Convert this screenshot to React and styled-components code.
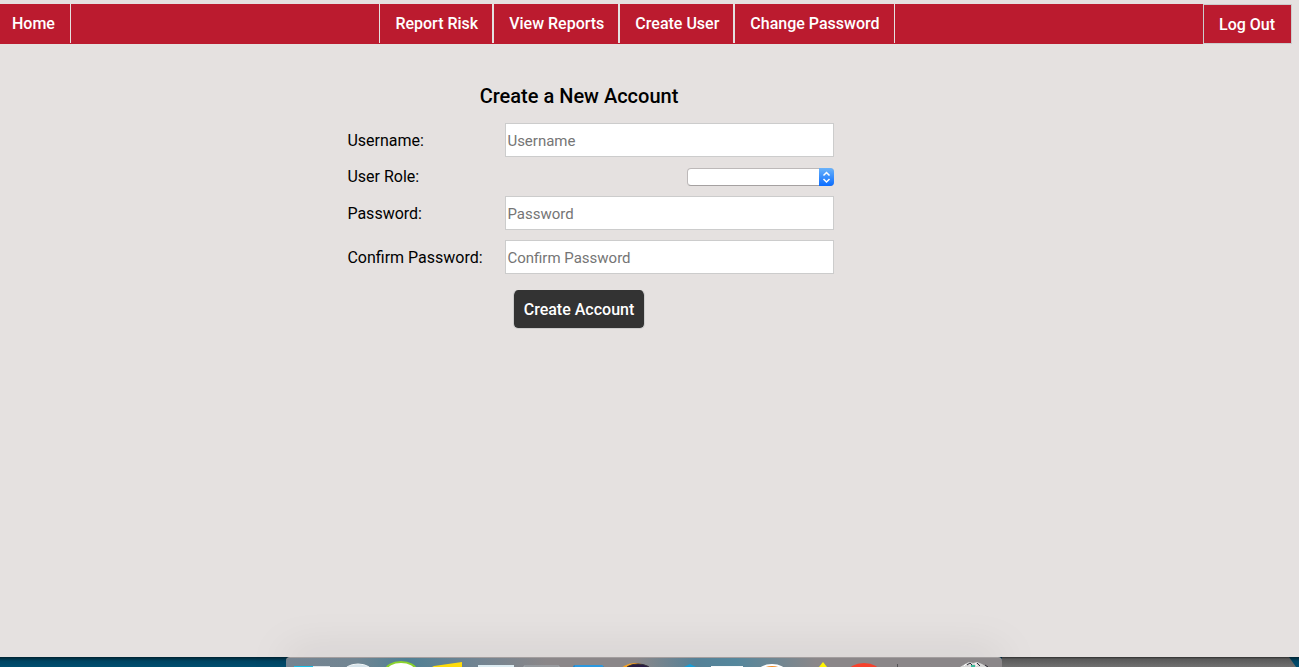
import React from "react";
import styled, { createGlobalStyle } from "styled-components";

const RED = "#bb1b2f";

const GlobalStyle = createGlobalStyle`
  *, *::before, *::after { box-sizing: border-box; }
  body {
    margin: 0;
    background: #e5e1e0;
    color: #000;
    font-family: Roboto, "Liberation Sans", sans-serif;
    font-size: 16px;
    line-height: 20px;
  }
  input, select, button { font-family: inherit; }
`;

const Page = styled.div`
  display: flex;
  flex-direction: column;
  min-height: 100vh;
`;

const Header = styled.header`
  display: flex;
  padding: 4px 7px 0 0;
`;

const NavBar = styled.nav`
  display: flex;
  align-items: flex-start;
  flex: 1;
  height: 40px;
  background: ${RED};
`;

const NavGroup = styled.div`
  display: flex;
  margin: 0 auto;
`;

const NavLink = styled.a`
  height: 39px;
  padding: ${(p) => (p.$home ? "10px 15px 9px 12px" : "10px 14px 9px 15px")};
  border: solid #e5e1e0;
  border-width: ${(p) => (p.$home ? "0 1px 0 0" : "0 1px")};
  color: #fff;
  font-weight: 500;
  text-decoration: none;
  white-space: nowrap;
`;

const LogOutButton = styled.button`
  height: 40px;
  padding: 0 16px 0 15px;
  border: 1px solid #ccc;
  background: ${RED};
  color: #fff;
  font-size: 16px;
  font-weight: 500;
`;

const Main = styled.main`
  flex: 1;
  padding: 41px 141px 0 0;
`;

const Form = styled.form`
  display: flex;
  flex-direction: column;
  width: 40%;
  margin: 0 auto;
`;

const Title = styled.h1`
  margin: 0 0 16px;
  font-size: 20px;
  line-height: 22px;
  font-weight: 500;
  text-align: center;
`;

const Fields = styled.div`
  display: grid;
  grid-template-columns: 158px 329px;
  row-gap: 10px;
  align-items: center;
  line-height: 19px;
`;

const Input = styled.input`
  width: 100%;
  height: 34px;
  padding: 1px 1px 0;
  border: 1px solid #ccc;
  border-radius: 0;
  background: #fff;
  font-size: 15px;
  &::placeholder { color: #757575; }
`;

const SelectBox = styled.div`
  position: relative;
  justify-self: end;
  align-self: end;
  width: 147px;
  height: 18px;
`;

const Select = styled.select`
  display: block;
  width: 100%;
  height: 100%;
  border: 1px solid #bdb9b9;
  border-bottom-color: #a5a1a1;
  border-radius: 4px;
  background: #fff;
  appearance: none;
`;

const Stepper = styled.span`
  position: absolute;
  inset: 0 0 0 auto;
  width: 15px;
  border-radius: 0 4px 4px 0;
  background: linear-gradient(#6bb3fa, #0a6cff);
  pointer-events: none;
  svg { display: block; }
`;

const SubmitButton = styled.button`
  align-self: center;
  height: 39px;
  margin-top: 16px;
  padding: 0 10px;
  border: 1px solid #ccc;
  border-width: 0 1px 1px;
  border-radius: 5px;
  background: #333;
  background-clip: padding-box;
  color: #fff;
  font-size: 16px;
  font-weight: 500;
`;

const Desktop = styled.footer`
  display: grid;
  grid-template-columns: 1fr 716px 1fr;
  height: 10px;
  padding-right: 11px;
  background: linear-gradient(rgba(0, 0, 0, 0.55), rgba(0, 0, 0, 0.12) 4px, rgba(0, 0, 0, 0)), #004e70;
`;

const Dock = styled.div`
  grid-column: 2;
  overflow: hidden;
  border-top: 1px solid #a29e9e;
  border-radius: 4px 4px 0 0;
  background: linear-gradient(
    90deg,
    #768491 0, #718592 70px, #4f8094 120px, #718492 190px, #8b8789 260px,
    #8b8789 350px, #558197 410px, #55879c 450px, #8b8789 530px, #8b8789
  );
  box-shadow: 0 0 44px rgba(0, 0, 0, 0.22);
  svg { display: block; }
`;

const Window = styled.div`
  margin-right: -8px;
  background: linear-gradient(#303030, #5a5a5a 2px, #707070);
  clip-path: polygon(0 0, calc(100% - 7px) 0, 100% 100%, 0 100%);
`;

function DockIcons() {
  return (
    <svg width="716" height="9" viewBox="0 1 716 9" aria-hidden="true">
      <path d="M8 9h19v1H8z" fill="#18bfe8" />
      <path d="M27 9h17v1H27z" fill="#dce3e8" />
      <ellipse cx="72" cy="16" rx="15" ry="9" fill="#d5e3ea" stroke="#f2f7f8" />
      <ellipse cx="115" cy="13" rx="16" ry="9" fill="#8bd32d" />
      <ellipse cx="115" cy="14" rx="14" ry="8" fill="#fff" />
      <path d="M148 9 176 5V10H146z" fill="#ffdc0a" />
      <path d="M192 8h36v2H192z" fill="#dcecf2" />
      <path d="M238 10V9h35v1" fill="none" stroke="#a5adb2" />
      <path d="M287 10V9l2-1h27l2 2z" fill="#2086cc" />
      <path d="M289 9h28" stroke="#37a9ef" />
      <ellipse cx="349" cy="15" rx="15" ry="9" fill="#f5a020" />
      <ellipse cx="352" cy="15" rx="14" ry="8" fill="#271a42" stroke="#34313b" />
      <path d="m398 10 6-3 6 3z" fill="#159ed8" />
      <path d="M425 9h32v1H425z" fill="#f5f8f9" />
      <ellipse cx="486" cy="15" rx="14" ry="8" fill="#fff" />
      <ellipse cx="486" cy="16" rx="12" ry="7" fill="#f58b22" />
      <path d="m533 10 4-5 4 5z" fill="#fff500" />
      <ellipse cx="578" cy="15" rx="16" ry="9" fill="#f6412c" />
      <path d="M611.500 7v3" stroke="#555356" />
      <path d="m674 10 5-3 4-2 4 1 4-1 5 2 5 3z" fill="#d5d5d5" />
      <path d="m681 8 3-2 2 2m5-2 3 3m5-1 3 2" fill="none" stroke="#302f38" />
      <path d="M685 8h4v2h-4z" fill="#39b897" />
      <path d="m678 9 2-2m9-1 2 3" fill="none" stroke="#fff" />
    </svg>
  );
}

const links = ["Report Risk", "View Reports", "Create User", "Change Password"];

export default function App() {
  return (
    <Page>
      <GlobalStyle />
      <Header>
        <NavBar>
          <NavLink href="#home" $home>Home</NavLink>
          <NavGroup>
            {links.map((label) => (
              <NavLink key={label} href={`#${label.toLowerCase().replace(" ", "-")}`}>{label}</NavLink>
            ))}
          </NavGroup>
        </NavBar>
        <LogOutButton type="button">Log Out</LogOutButton>
      </Header>
      <Main>
        <Form onSubmit={(e) => e.preventDefault()}>
          <Title>Create a New Account</Title>
          <Fields>
            <label htmlFor="username">Username:</label>
            <Input id="username" type="text" placeholder="Username" />
            <label htmlFor="role">User Role:</label>
            <SelectBox>
              <Select id="role" defaultValue="">
                <option value="" />
              </Select>
              <Stepper>
                <svg width="15" height="18" viewBox="0 0 15 18" fill="none" stroke="#fff" strokeWidth="1.500" aria-hidden="true">
                  <path d="m4.500 7.500 3-3 3 3m-6 3.500 3 3 3-3" />
                </svg>
              </Stepper>
            </SelectBox>
            <label htmlFor="password">Password:</label>
            <Input id="password" type="password" placeholder="Password" />
            <label htmlFor="confirm">Confirm Password:</label>
            <Input id="confirm" type="password" placeholder="Confirm Password" />
          </Fields>
          <SubmitButton type="submit">Create Account</SubmitButton>
        </Form>
      </Main>
      <Desktop>
        <Dock>
          <DockIcons />
        </Dock>
        <Window />
      </Desktop>
    </Page>
  );
}
